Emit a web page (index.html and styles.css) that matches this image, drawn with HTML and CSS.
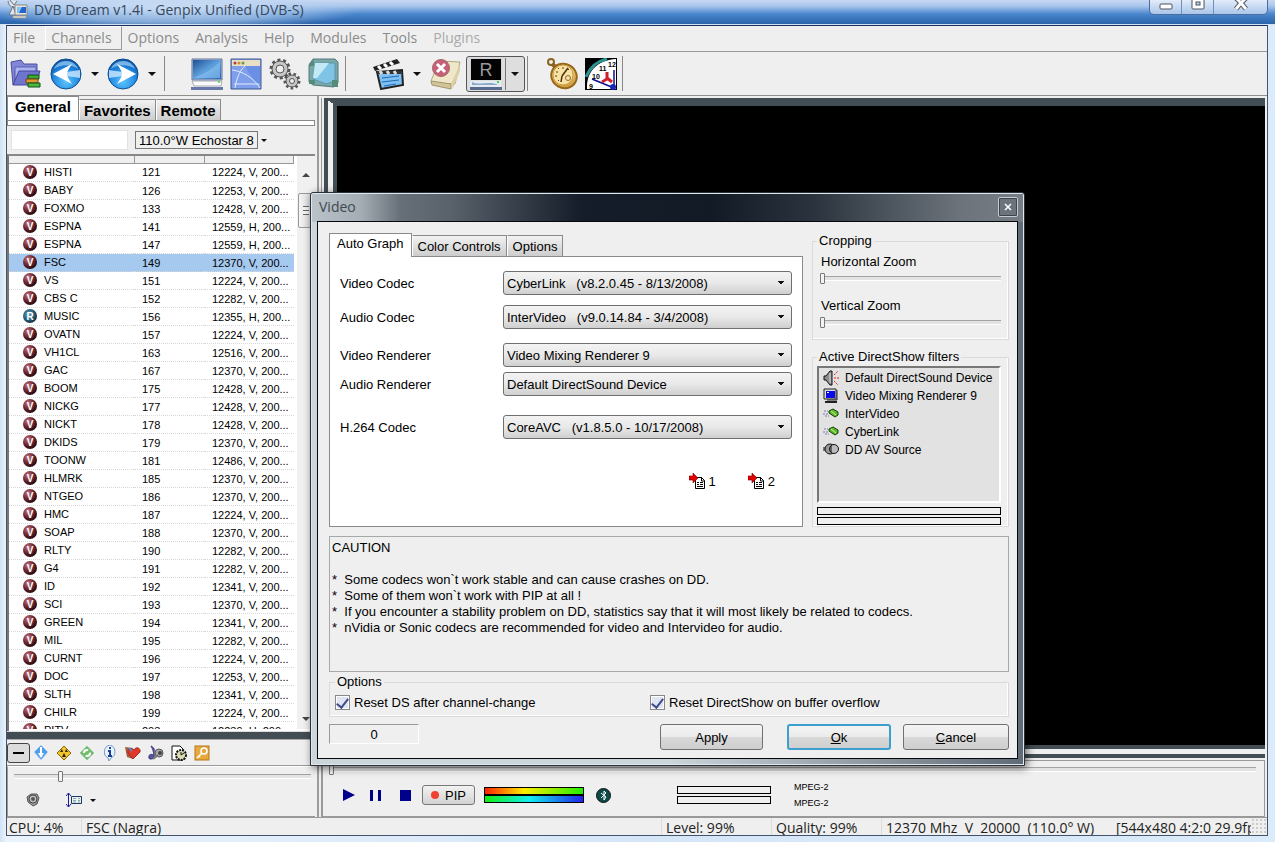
FILE: index.html
```html
<!DOCTYPE html>
<html lang="en">
<head>
  <meta charset="UTF-8" />
  <meta name="viewport" content="width=device-width, initial-scale=1.0" />
  <title>DVB Dream v1.4i - Genpix Unified (DVB-S)</title>
  <link rel="stylesheet" href="styles.css">
</head>
<body>
  <!-- shared icons -->
  <svg class="defs" width="0" height="0" aria-hidden="true">
    <defs>
      <radialGradient id="red" cx="35%" cy="30%" r="75%"><stop offset="0" stop-color="#c47e84"/><stop offset=".45" stop-color="#7d2f3b"/><stop offset="1" stop-color="#1d0508"/></radialGradient>
      <radialGradient id="teal" cx="40%" cy="40%" r="70%"><stop offset="0" stop-color="#6fa9bd"/><stop offset=".5" stop-color="#2f6680"/><stop offset="1" stop-color="#0b1c28"/></radialGradient>
      <radialGradient id="ball" cx="50%" cy="75%" r="75%"><stop offset="0" stop-color="#5cc4ff"/><stop offset=".6" stop-color="#1f86e0"/><stop offset="1" stop-color="#0b4f9f"/></radialGradient>
      <linearGradient id="screen" x1="0" y1="0" x2="1" y2="1"><stop offset="0" stop-color="#1d4f94"/><stop offset=".5" stop-color="#5fa0dd"/><stop offset="1" stop-color="#2c66b4"/></linearGradient>
      <linearGradient id="gold" x1="0" y1="0" x2="1" y2="1"><stop offset="0" stop-color="#ffeeb5"/><stop offset="1" stop-color="#c98a25"/></linearGradient>
    </defs>
    <symbol id="i-v" viewBox="0 0 14 14"><circle cx="7" cy="7" r="7" fill="url(#red)"/><text x="7" y="11" text-anchor="middle" class="badge-text">V</text></symbol>
    <symbol id="i-r" viewBox="0 0 14 14"><circle cx="7" cy="7" r="7" fill="url(#teal)"/><text x="7" y="11" text-anchor="middle" class="badge-text">R</text></symbol>
    <symbol id="i-plug" viewBox="0 0 16 16"><path d="M1 5h4M0 8h5M2 10h4" stroke="#7a7ab0" stroke-dasharray="2 1"/><path d="M6 5l4-2 5 3v3l-3 2-6-4z" fill="#5fb92a" stroke="#123f08"/><path d="M8 5l5 4" stroke="#c7f59a"/></symbol>
    <symbol id="i-import" viewBox="0 0 17 16"><path d="M6.500 4.500h6l3 3v8h-9z" fill="#fff" stroke="#000"/><path d="M12.500 4v4h3M8 9.500h2M11 9.500h3M8 11.500h2M11 11.500h3M8 13.500h6" stroke="#000" fill="none"/><path d="M0 3h4V0l5 5-5 5V7H0z" fill="#e30000" stroke="#700" stroke-width=".6"/></symbol>
  </svg>

  <div class="window">
    <header class="titlebar">
      <svg class="app-icon" width="22" height="20" viewBox="0 0 22 20"><path d="M1 1c1 6 5 8 9 5M3 0l4 5 3-4M6 6l-4 9h7z" fill="#dfe5ec" stroke="#6d7884"/><path d="M8 5h12v10H8z" fill="#e9e6dc" stroke="#888"/><path d="M10 7h9v6h-9z" fill="#2165cc"/><path d="M10 7h5l-3 6h-2z" fill="#83c1f4"/><path d="M6 16h13v2H6z" fill="#d8d3c4" stroke="#999" stroke-width=".5"/></svg>
      <h1>DVB Dream v1.4i - Genpix Unified (DVB-S)</h1>
      <div class="window-buttons">
        <button aria-label="Minimize"><svg width="14" height="14" viewBox="0 0 14 14"><rect x="1" y="4" width="12" height="5" rx="1" fill="#fff" stroke="#4a5360"/></svg></button>
        <button aria-label="Maximize"><svg width="14" height="14" viewBox="0 0 14 14"><rect x="1" y="-3" width="12" height="12" rx="1" fill="#fff" stroke="#4a5360"/><rect x="5" y="2" width="4" height="3" fill="#bcd0ee" stroke="#4a5360"/></svg></button>
        <button class="wide" aria-label="Close"><svg width="14" height="14" viewBox="0 0 14 14"><path d="M2 -2l5 5 5-5M2 9l5-6 5 6" stroke="#4a5360" stroke-width="5" fill="none"/><path d="M2 -2l5 5 5-5M2 9l5-6 5 6" stroke="#fff" stroke-width="3" fill="none"/></svg></button>
      </div>
    </header>

    <div class="client">
      <nav class="menubar">
        <button>File</button>
        <button class="hot">Channels</button>
        <button>Options</button>
        <button>Analysis</button>
        <button>Help</button>
        <button>Modules</button>
        <button>Tools</button>
        <button class="light">Plugins</button>
      </nav>

      <div class="toolbar">
        <div class="tools">
          <button class="tool folder" aria-label="Open channels"><svg width="32" height="32" viewBox="0 0 32 32"><path d="M1 4l10-2 3 4h13v7H5v12L3 27z" fill="#8187d6" stroke="#4b4f9c"/><path d="M5 9h21v16H5z" fill="#abb4f0" stroke="#5b60b0"/><path d="M9 13h21l-4 14H3z" fill="#6d75cf" stroke="#44499a"/><path d="M18 17h11v4H18z" fill="#3aa935" stroke="#14501b"/><path d="M16 21h12v4H16z" fill="#e09a31" stroke="#6c4410"/><path d="M18 25h12v4H18z" fill="#49b83c" stroke="#14501b"/></svg></button>
          <button class="tool" aria-label="Back"><svg width="32" height="32" viewBox="0 0 32 32"><circle cx="16" cy="16" r="15" fill="url(#ball)" stroke="#0a4d92"/><path d="M4 11a13 13 0 0 1 24 0c-7-5-17-5-24 0z" fill="#9fd3fa" opacity=".7"/><path d="M16 14c5-1 10-1 14-2v8c-4-1-9-1-14-2z" fill="#cfeaff" opacity=".8"/><path d="M3 16L22 6c-4 6-5 8-5 10s1 4 5 10z" fill="#fff"/></svg></button>
          <button class="drop" aria-label="Back history"></button>
          <button class="tool" aria-label="Forward"><svg width="32" height="32" viewBox="0 0 32 32"><circle cx="16" cy="16" r="15" fill="url(#ball)" stroke="#0a4d92"/><path d="M4 11a13 13 0 0 1 24 0c-7-5-17-5-24 0z" fill="#9fd3fa" opacity=".7"/><path d="M16 14c-5-1-10-1-14-2v8c4-1 9-1 14-2z" fill="#cfeaff" opacity=".8"/><path d="M29 16L10 6c4 6 5 8 5 10s-1 4-5 10z" fill="#fff"/></svg></button>
          <button class="drop" aria-label="Forward history"></button>
        </div>
        <div class="tools spaced">
          <button class="tool" aria-label="Display"><svg width="32" height="32" viewBox="0 0 32 32"><path d="M1 1h30v21H1z" fill="#b4c4da" stroke="#5f7396"/><path d="M2 2h28v19H2z" fill="url(#screen)"/><path d="M3 20C12 16 20 12 29 4v16z" fill="#8fc8f5" opacity=".6"/><path d="M1 23h30l-1 5H3z" fill="#fafafa" stroke="#a6adb8"/><path d="M0 29h32v3H0z" fill="#6878a8"/><circle cx="28" cy="24" r="1" fill="#3d3"/></svg></button>
          <button class="tool" aria-label="Signal graph"><svg width="32" height="32" viewBox="0 0 32 32"><path d="M1 1h30v30H1z" fill="#7f9fec" stroke="#3e568f"/><path d="M2 2h28v6H2z" fill="#e9dfc4"/><circle cx="5" cy="5" r="1.500" fill="#b93a3a"/><circle cx="9" cy="5" r="1.500" fill="#c98a3a"/><circle cx="13" cy="5" r="1.500" fill="#6a9b4a"/><path d="M2 12c10 1 22 8 28 18M5 30C7 18 11 11 15 8M4 26h26" stroke="#e1ebff" fill="none"/><path d="M15 8c4 8 9 15 15 19V8z" fill="#557fdd" opacity=".5"/></svg></button>
          <button class="tool" aria-label="Settings"><svg width="32" height="32" viewBox="0 0 32 32"><g fill="none" stroke="#555"><circle cx="11" cy="11" r="9" stroke-width="3" stroke-dasharray="3 2.650"/><circle cx="11" cy="11" r="8" fill="#c6c6c6"/><circle cx="11" cy="11" r="4" fill="#efefef"/><circle cx="23" cy="23" r="7" stroke-width="3" stroke-dasharray="2.500 2.390"/><circle cx="23" cy="23" r="6" fill="#c6c6c6"/><circle cx="23" cy="23" r="2.500" fill="#efefef"/></g></svg></button>
          <button class="tool" aria-label="Picture"><svg width="32" height="32" viewBox="0 0 32 32"><path d="M5 1h22l3 3v21l-4 4-21-2-4-3V7z" fill="#7ba7a6" stroke="#527a7c"/><path d="M7 5h20v18l-9 3-13-5z" fill="#7fc4e4" stroke="#5a97ab"/><path d="M7 5h14L9 20H5z" fill="#c2e9f5"/><path d="M24 22h6v7h-6zM1 22h6v4H1zM1 6l5-4v6H1z" fill="#538b7c"/></svg></button>
        </div>
        <div class="tools spaced">
          <button class="tool" aria-label="Record"><svg width="32" height="32" viewBox="0 0 32 32"><path d="M5 14l25-2 1 15-22 4z" fill="#7cc0f4" stroke="#222" stroke-width="2"/><path d="M1 9l24-8 3 4L3 13z" fill="#222"/><path d="M6 8l3 3M12 6l3 3M18 4l3 3" stroke="#fff" stroke-width="3"/><path d="M5 13h24v3H5z" fill="#333"/><path d="M8 13l2 3M15 13l2 3M22 13l2 3" stroke="#ddd" stroke-width="3"/><path d="M10 20l17-2M10 24l17-2M12 28l12-2" stroke="#2368b0"/></svg></button>
          <button class="drop" aria-label="Record options"></button>
          <button class="tool" aria-label="Stop recording"><svg width="32" height="32" viewBox="0 0 32 32"><path d="M10 3l21 1-5 22H7L2 23z" fill="#efe7c9" stroke="#b4a67c"/><path d="M2 23l20 3v5L3 27z" fill="#d3c59b" stroke="#a3946a"/><path d="M22 26l9-20v7l-7 17z" fill="#dccfa5"/><circle cx="12" cy="10" r="8.500" fill="#c4607a" stroke="#a66"/><path d="M8 6l8 8M16 6l-8 8" stroke="#fff" stroke-width="3"/></svg></button>
          <span class="pressed">
            <button aria-label="Radio screen"><svg width="32" height="32" viewBox="0 0 32 32"><path d="M0 0h32v22H0z" fill="#cfd4dc"/><path d="M1 1h30v21H1z" fill="#030303"/><text x="16" y="18" text-anchor="middle" class="r-text">R</text><path d="M0 23h31v6H0z" fill="#e3eaf2"/><path d="M2 24c8 4 18-2 26 3H2z" fill="#8aa8c8"/><path d="M0 29h32v3H0z" fill="#56698f"/><circle cx="28" cy="24" r="1" fill="#2b2"/></svg></button>
            <button class="drop" aria-label="Radio screen options"></button>
          </span>
        </div>
        <div class="tools last">
          <button class="tool" aria-label="Timer"><svg width="32" height="32" viewBox="0 0 32 32"><circle cx="5" cy="4" r="3" fill="none" stroke="#8a6321" stroke-width="2"/><path d="M6 6l5 4" stroke="#8a6321" stroke-width="4"/><ellipse cx="18" cy="18" rx="13" ry="12" transform="rotate(30 18 18)" fill="url(#gold)" stroke="#966719" stroke-width="2"/><circle cx="17" cy="17" r="10" fill="#f8e3a5" stroke="#c99b45"/><path d="M17 9v2M10 14h2M9 18h2M12 23l1-1M12 10l1 1M23 11l-1 1" stroke="#5a3a10"/><path d="M16 18l6-8M16 18l-1 6" stroke="#4a3010" stroke-width="1.500"/><circle cx="22" cy="20" r="2.500" fill="none" stroke="#8a6a32"/></svg></button>
          <button class="tool" aria-label="Schedule"><svg width="32" height="32" viewBox="0 0 32 32"><path d="M0 0h32v32H0z"/><path d="M2 31C1 14 12 2 31 1v30z" fill="#fff"/><path d="M1 19C5 9 12 3 22 1" fill="none" stroke="#2c9393" stroke-width="3"/><path d="M7 21l22 9M29 12v18" stroke="#0d0d94" stroke-width="1.500"/><path d="M22 14v7l-5 3M22 20l5 4" stroke="#d01f2c" stroke-width="3" fill="none"/><text x="14" y="13" class="dial">11</text><text x="23" y="9" class="dial">12</text><text x="7" y="21" class="dial">10</text><text x="4" y="31" class="dial">9</text><circle cx="28" cy="29" r="3" fill="#1728b4"/></svg></button>
        </div>
      </div>

      <div class="workspace">
        <aside class="sidebar">
          <div class="side-tabs" role="tablist">
            <button role="tab" class="active">General</button>
            <button role="tab">Favorites</button>
            <button role="tab">Remote</button>
          </div>
          <div class="tab-strip"></div>
          <div class="search-row">
            <input type="text" aria-label="Search channel">
            <button class="satellite">110.0°W Echostar 8</button>
            <button class="drop" aria-label="Choose satellite"></button>
          </div>
          <div class="channels">
            <div class="channel-list">
              <table>
                <thead><tr><th></th><th></th><th></th></tr></thead>
                <tbody>
                  <tr><td><svg><use href="#i-v"/></svg>HISTI</td><td>121</td><td>12224, V, 200...</td></tr>
                  <tr><td><svg><use href="#i-v"/></svg>BABY</td><td>126</td><td>12253, V, 200...</td></tr>
                  <tr><td><svg><use href="#i-v"/></svg>FOXMO</td><td>133</td><td>12428, V, 200...</td></tr>
                  <tr><td><svg><use href="#i-v"/></svg>ESPNA</td><td>141</td><td>12559, H, 200...</td></tr>
                  <tr><td><svg><use href="#i-v"/></svg>ESPNA</td><td>147</td><td>12559, H, 200...</td></tr>
                  <tr class="selected"><td><svg><use href="#i-v"/></svg>FSC</td><td>149</td><td>12370, V, 200...</td></tr>
                  <tr><td><svg><use href="#i-v"/></svg>VS</td><td>151</td><td>12224, V, 200...</td></tr>
                  <tr><td><svg><use href="#i-v"/></svg>CBS C</td><td>152</td><td>12282, V, 200...</td></tr>
                  <tr><td><svg><use href="#i-r"/></svg>MUSIC</td><td>156</td><td>12355, H, 200...</td></tr>
                  <tr><td><svg><use href="#i-v"/></svg>OVATN</td><td>157</td><td>12224, V, 200...</td></tr>
                  <tr><td><svg><use href="#i-v"/></svg>VH1CL</td><td>163</td><td>12516, V, 200...</td></tr>
                  <tr><td><svg><use href="#i-v"/></svg>GAC</td><td>167</td><td>12370, V, 200...</td></tr>
                  <tr><td><svg><use href="#i-v"/></svg>BOOM</td><td>175</td><td>12428, V, 200...</td></tr>
                  <tr><td><svg><use href="#i-v"/></svg>NICKG</td><td>177</td><td>12428, V, 200...</td></tr>
                  <tr><td><svg><use href="#i-v"/></svg>NICKT</td><td>178</td><td>12428, V, 200...</td></tr>
                  <tr><td><svg><use href="#i-v"/></svg>DKIDS</td><td>179</td><td>12370, V, 200...</td></tr>
                  <tr><td><svg><use href="#i-v"/></svg>TOONW</td><td>181</td><td>12486, V, 200...</td></tr>
                  <tr><td><svg><use href="#i-v"/></svg>HLMRK</td><td>185</td><td>12370, V, 200...</td></tr>
                  <tr><td><svg><use href="#i-v"/></svg>NTGEO</td><td>186</td><td>12370, V, 200...</td></tr>
                  <tr><td><svg><use href="#i-v"/></svg>HMC</td><td>187</td><td>12224, V, 200...</td></tr>
                  <tr><td><svg><use href="#i-v"/></svg>SOAP</td><td>188</td><td>12370, V, 200...</td></tr>
                  <tr><td><svg><use href="#i-v"/></svg>RLTY</td><td>190</td><td>12282, V, 200...</td></tr>
                  <tr><td><svg><use href="#i-v"/></svg>G4</td><td>191</td><td>12282, V, 200...</td></tr>
                  <tr><td><svg><use href="#i-v"/></svg>ID</td><td>192</td><td>12341, V, 200...</td></tr>
                  <tr><td><svg><use href="#i-v"/></svg>SCI</td><td>193</td><td>12370, V, 200...</td></tr>
                  <tr><td><svg><use href="#i-v"/></svg>GREEN</td><td>194</td><td>12341, V, 200...</td></tr>
                  <tr><td><svg><use href="#i-v"/></svg>MIL</td><td>195</td><td>12282, V, 200...</td></tr>
                  <tr><td><svg><use href="#i-v"/></svg>CURNT</td><td>196</td><td>12224, V, 200...</td></tr>
                  <tr><td><svg><use href="#i-v"/></svg>DOC</td><td>197</td><td>12253, V, 200...</td></tr>
                  <tr><td><svg><use href="#i-v"/></svg>SLTH</td><td>198</td><td>12341, V, 200...</td></tr>
                  <tr><td><svg><use href="#i-v"/></svg>CHILR</td><td>199</td><td>12224, V, 200...</td></tr>
                  <tr><td><svg><use href="#i-v"/></svg>PITV</td><td>203</td><td>12239, H, 200...</td></tr>
                </tbody>
              </table>
            </div>
            <div class="scrollbar">
              <button class="up" aria-label="Scroll up"></button>
              <div class="scroll-thumb"></div>
              <button class="down" aria-label="Scroll down"></button>
            </div>
          </div>
          <div class="dark-bar"></div>
          <div class="filters">
            <button class="minus" aria-label="Collapse"></button>
            <button aria-label="Blue"><svg viewBox="0 0 16 16"><path d="M8 0l7 7-7 8-7-8z" fill="#4f9fe8" stroke="#b9d8f4"/><path d="M7 2h2v6h2l-3 5-3-5h2z" fill="#fff"/></svg></button>
            <button aria-label="Radiation"><svg viewBox="0 0 16 16"><path d="M8 1l7 7-7 7-7-7z" fill="#f3c52b" stroke="#8a6a10"/><path d="M4 7h3l-1-3zM9 7h3l-2-3zM6 12h4L8 8z" fill="#221"/></svg></button>
            <button aria-label="Refresh"><svg viewBox="0 0 16 16"><path d="M8 1l7 7-7 7-7-7z" fill="#6fbf6a" stroke="#9fc79f"/><circle cx="8" cy="8" r="3" fill="none" stroke="#fff" stroke-width="2" stroke-dasharray="6 3"/></svg></button>
            <button aria-label="Info"><svg viewBox="0 0 16 16"><path d="M8 0a7 7 0 0 1 1 13l-2 3-1-3A7 7 0 0 1 8 0z" fill="#e8f2fc" stroke="#6f9bc9"/><path d="M8 2v2M6 6h2v5M6 11h4" stroke="#1c3f9a" stroke-width="2" fill="none"/></svg></button>
            <button aria-label="Favorites"><svg viewBox="0 0 16 16"><path d="M0 2l7 1 1 11-6-2z" fill="#a65c40"/><path d="M8 14L3 8c-1-5 4-6 6-3 2-4 7-2 6 2z" fill="#e2382c" stroke="#932"/><path d="M4 3l3 3" stroke="#5b88c9" stroke-width="2"/></svg></button>
            <button aria-label="Audio"><svg viewBox="0 0 16 16"><path d="M3 1l3 3v7M6 11c0 3-5 4-5 1s3-3 5-1z" fill="#5b58a0" stroke="#4a4888" stroke-width="1.500"/><circle cx="11" cy="8" r="4" fill="#a9a9a9" stroke="#555"/><circle cx="12" cy="8" r="2" fill="#444"/><path d="M5 14l5-4" stroke="#777" stroke-width="2"/></svg></button>
            <button aria-label="Schedule"><svg viewBox="0 0 16 16"><path d="M1 1h8l3 3v11H1z" fill="#fff" stroke="#111"/><circle cx="10" cy="10" r="5" fill="#dcdcb4" stroke="#111" stroke-width="2" stroke-dasharray="2 1"/><path d="M10 7v3l3-2" stroke="#111" fill="none"/></svg></button>
            <button aria-label="Key"><svg viewBox="0 0 16 16"><rect x="1" y="1" width="14" height="14" fill="#e8a83a" stroke="#b5781c"/><circle cx="10" cy="6" r="3" fill="none" stroke="#fff" stroke-width="1.500"/><path d="M8 8l-5 5M5 11l1 1" stroke="#fff" stroke-width="1.500"/></svg></button>
          </div>
          <div class="volume">
            <input type="range" aria-label="Volume" min="0" max="100" value="15">
            <div class="volume-icons">
              <button aria-label="Mute"><svg width="14" height="14" viewBox="0 0 14 14"><path d="M1 4l4-3h6l2 4-2 6-4 2-5-4z" fill="#999" stroke="#555"/><circle cx="7" cy="6" r="4" fill="#c4c4c4" stroke="#444"/><circle cx="7" cy="6" r="2" fill="#555"/></svg></button>
              <button class="aspect" aria-label="Aspect ratio"><svg width="17" height="15" viewBox="0 0 17 15"><path d="M2.500 0v14M0 3l2.500-3 2.500 3M0 11l2.500 3 2.500-3" stroke="#1a1a9a" fill="none"/><path d="M5.500 3.500h10v7h-10z" fill="#e7f3e9" stroke="#236"/><path d="M7 5.500h3M12 5.500h2M7 7.500h3M12 7.500h2M7 9h3M12 9h2" stroke="#8ab"/></svg></button>
              <button class="drop" aria-label="Aspect ratio options"></button>
            </div>
          </div>
        </aside>

        <main class="stage">
          <div class="screen"></div>
          <div class="player">
            <input type="range" class="seek" aria-label="Position" value="0">
            <div class="controls">
              <button aria-label="Play"><svg width="12" height="12"><path d="M0 0l12 6-12 6z" fill="#00008b"/></svg></button>
              <button class="pause" aria-label="Pause"><svg width="11" height="11"><path d="M0 0h3v11H0zM8 0h3v11H8z" fill="#00008b"/></svg></button>
              <button class="stop" aria-label="Stop"><svg width="11" height="11"><path d="M0 0h11v11H0z" fill="#00008b"/></svg></button>
              <button class="pip"><span class="dot"></span>PIP</button>
              <div class="levels"><div class="level warm"></div><div class="level cool"></div></div>
              <button class="globe" aria-label="Stream"><svg width="15" height="15" viewBox="0 0 15 15"><circle cx="7.500" cy="7.500" r="7" fill="#0b4a48" stroke="#111"/><path d="M5 5l5 4-2 3V3l2 2-5 5" stroke="#fff" fill="none"/></svg></button>
              <div class="meters"><div class="meter"></div><div class="meter"></div></div>
              <div class="formats"><span>MPEG-2</span><span>MPEG-2</span></div>
            </div>
          </div>
        </main>
      </div>

      <footer class="statusbar">
        <span class="cpu">CPU: 4%</span>
        <span class="name">FSC (Nagra)</span>
        <span class="level-text">Level: 99%</span>
        <span class="quality">Quality: 99%</span>
        <span class="tuning">12370 Mhz&nbsp; V&nbsp; 20000&nbsp; (110.0° W)</span>
        <span class="format">[544x480 4:2:0 29.9fps]</span>
        <span class="grip"></span>
      </footer>
    </div>
  </div>

  <section class="dialog" role="dialog" aria-labelledby="dialog-title">
    <div class="dialog-title">
      <h2 id="dialog-title">Video</h2>
      <button aria-label="Close"><svg width="8" height="8" viewBox="0 0 8 8"><path d="M1 1l6 6M7 1L1 7" stroke="#fff" stroke-width="1.500"/></svg></button>
    </div>
    <form class="dialog-body">
      <div class="top">
        <div class="tabs">
          <div class="tab-heads" role="tablist">
            <button type="button" role="tab" class="active">Auto Graph</button>
            <button type="button" role="tab">Color Controls</button>
            <button type="button" role="tab">Options</button>
          </div>
          <div class="tab-panel">
            <div class="rows codecs">
              <label for="video-codec">Video Codec</label>
              <select id="video-codec"><option>CyberLink&nbsp;&nbsp; (v8.2.0.45 - 8/13/2008)</option></select>
              <label for="audio-codec">Audio Codec</label>
              <select id="audio-codec"><option>InterVideo&nbsp;&nbsp; (v9.0.14.84 - 3/4/2008)</option></select>
            </div>
            <div class="rows renderers">
              <label for="video-renderer">Video Renderer</label>
              <select id="video-renderer"><option>Video Mixing Renderer 9</option></select>
              <label for="audio-renderer">Audio Renderer</label>
              <select id="audio-renderer"><option>Default DirectSound Device</option></select>
            </div>
            <div class="rows h264">
              <label for="h264-codec">H.264 Codec</label>
              <select id="h264-codec"><option>CoreAVC&nbsp;&nbsp; (v1.8.5.0 - 10/17/2008)</option></select>
            </div>
            <div class="presets">
              <button type="button"><svg width="17" height="16"><use href="#i-import"/></svg>1</button>
              <button type="button"><svg width="17" height="16"><use href="#i-import"/></svg>2</button>
            </div>
          </div>
        </div>

        <div class="side">
          <fieldset class="cropping">
            <legend>Cropping</legend>
            <label for="h-zoom">Horizontal Zoom</label>
            <input type="range" id="h-zoom" value="0">
            <label for="v-zoom">Vertical Zoom</label>
            <input type="range" id="v-zoom" value="0">
          </fieldset>
          <fieldset class="active-filters">
            <legend>Active DirectShow filters</legend>
            <ul>
              <li><svg viewBox="0 0 16 16"><path d="M1 6h2l4-5h2v14H7L3 10H1z" fill="#8d8d8d" stroke="#111"/><path d="M7 3v10" stroke="#ddd"/><path d="M11 5l4-4M11 8h5M11 11l4 4" stroke="#d22" stroke-dasharray="2 1"/></svg>Default DirectSound Device</li>
              <li><svg viewBox="0 0 16 16"><path d="M1 1h12v10H1z" fill="#ddd" stroke="#222"/><path d="M3 3h9v7H3z" fill="#0a0ae8"/><path d="M14 2v10H4" stroke="#222" fill="none"/><path d="M2 14h12" stroke="#222" stroke-width="2"/><path d="M4 4h2v1H4z" fill="#fff"/></svg>Video Mixing Renderer 9</li>
              <li><svg><use href="#i-plug"/></svg>InterVideo</li>
              <li><svg><use href="#i-plug"/></svg>CyberLink</li>
              <li><svg viewBox="0 0 16 16"><path d="M0 6h5M0 8h5" stroke="#111"/><circle cx="7" cy="7" r="5" fill="#999" stroke="#111"/><circle cx="11" cy="7" r="4.500" fill="#bbb" stroke="#111"/><path d="M8 4v6" stroke="#111"/></svg>DD AV Source</li>
            </ul>
            <div class="meter"></div>
            <div class="meter"></div>
          </fieldset>
        </div>
      </div>

      <textarea class="caution" readonly aria-label="Caution" rows="8">CAUTION

*  Some codecs won`t work stable and can cause crashes on DD.
*  Some of them won`t work with PIP at all !
*  If you encounter a stability problem on DD, statistics say that it will most likely be related to codecs.
*  nVidia or Sonic codecs are recommended for video and Intervideo for audio.</textarea>

      <fieldset class="options">
        <legend>Options</legend>
        <label><input type="checkbox" checked>Reset DS after channel-change</label>
        <label><input type="checkbox" checked>Reset DirectShow on buffer overflow</label>
      </fieldset>

      <div class="actions">
        <output>0</output>
        <button type="button">Apply</button>
        <button type="submit" class="default"><u>O</u>k</button>
        <button type="button"><u>C</u>ancel</button>
      </div>
    </form>
  </section>
</body>
</html>
```
FILE: styles.css
```css
* {
  box-sizing: border-box;
}
body {
  margin: 0;
  height: 100vh;
  overflow: hidden;
  position: relative;
  font-family: "Liberation Sans", Arial, sans-serif;
  font-size: 13px;
  color: #000;
  background: #d3e4f6;
}
button,
input,
select,
textarea {
  font: inherit;
  color: inherit;
  margin: 0;
  padding: 0;
}
button {
  background: none;
  border: none;
  display: flex;
  align-items: center;
  justify-content: center;
}
svg {
  display: block;
  flex: none;
}
.defs {
  position: absolute;
}
.badge-text {
  font: bold 10px "Liberation Sans", sans-serif;
  fill: #fff;
}
.r-text {
  font: 18px "Liberation Sans", sans-serif;
  fill: #999;
}
.dial {
  font: bold 7px "Liberation Sans", sans-serif;
}

/* main window */
.window {
  height: 100%;
  display: flex;
  flex-direction: column;
  background: linear-gradient(90deg, #cfe2f4, #eaf3fc 6px, #d5e6f8 50%, #dcebfb);
}
.titlebar {
  display: flex;
  align-items: flex-start;
  height: 25px;
  flex: none;
  padding-left: 7px;
  border-bottom: 1px solid #d3e1f2;
  background:
    radial-gradient(ellipse 190px 20px at 170px 10px, rgba(215, 230, 248, 0.8), rgba(190, 214, 242, 0.6) 60%, transparent),
    linear-gradient(#c9d8f3, #a9c6ec 6px, #4a86cd 14px, #2d66ad 23px);
}
.titlebar h1 {
  margin: 0 auto 0 5px;
  font: 14px/19px "Open Sans", "Noto Sans", sans-serif;
  color: #38475a;
}
.window-buttons {
  display: flex;
  height: 15px;
  margin-right: 7px;
  border: 1px solid #4c6c9e;
  border-top: none;
  border-radius: 0 0 5px 5px;
  background: linear-gradient(#e3ecfa, #a9c5ea);
}
.window-buttons button {
  width: 32px;
  border-right: 1px solid #6f8fbf;
}
.window-buttons .wide {
  width: 53px;
  border-right: none;
}
.client {
  flex: 1;
  min-height: 0;
  margin: 0 7px 6px 6px;
  display: flex;
  flex-direction: column;
  background: #efefef;
  border: 1px solid #43536b;
  border-top-color: #16335c;
}

.menubar {
  display: flex;
  align-items: center;
  height: 26px;
  flex: none;
  border-bottom: 1px solid #999;
  font: 14px/20px "Open Sans", "Noto Sans", sans-serif;
  color: #8b8b8b;
}
.menubar button {
  height: 24px;
  margin-top: -2px;
  padding: 0 9px 0 5px;
  border: 1px solid transparent;
}
.menubar .hot {
  border-color: #fff #999 #999 #fff;
}
.menubar .light {
  color: #aaa;
}

.toolbar {
  display: flex;
  align-items: center;
  height: 44px;
  flex: none;
  border-bottom: 1px solid #8f8f8f;
}
.tools {
  display: flex;
  align-items: center;
  height: 35px;
  padding-left: 3px;
  border-right: 1px solid #888;
}
.tools.spaced {
  padding: 0 5px 0 19px;
}
.tools.last {
  gap: 7px;
  padding: 0 5px 0 18px;
}
.spaced .tool {
  margin-left: 7px;
}
.spaced .drop + .tool {
  margin: 0 5px 0 0;
}
.folder {
  margin-right: 8px;
}
.drop {
  width: 25px;
  height: 32px;
}
.drop::before {
  content: "";
  border: 4px solid transparent;
  border-top-color: #111;
  border-bottom: none;
}
.pressed {
  display: flex;
  align-items: center;
  height: 36px;
  margin-right: -3px;
  border: 1px solid #555;
  border-radius: 3px;
  background: #dedede;
}
.pressed button:first-child {
  padding: 0 3px;
}
.pressed .drop {
  width: 19px;
  border-left: 1px solid #777;
}

.workspace {
  flex: 1;
  min-height: 0;
  display: flex;
}

/* channel list */
.sidebar {
  width: 312px;
  flex: none;
  display: flex;
  flex-direction: column;
  padding-right: 2px;
  border-right: 2px solid #9c9c9c;
}
.side-tabs {
  display: flex;
  align-items: flex-end;
  height: 24px;
  flex: none;
  font-weight: bold;
  font-size: 15px;
}
.side-tabs button,
.tab-heads button {
  height: 21px;
  padding: 0 4px;
  border: 1px solid #8a8a8a;
  border-bottom: none;
  border-left-color: #fff;
  background: linear-gradient(#f2f2f2, #cdcdcd);
}
.tab-heads button {
  padding: 0 5px;
}
.side-tabs .active,
.tab-heads .active {
  height: 24px;
  padding: 0 7px 4px;
  background: #fff;
  border-left-color: #8a8a8a;
}
.tab-strip {
  height: 6px;
  flex: none;
  background: #fff;
  border: 1px solid #8a8a8a;
}
.search-row {
  display: flex;
  align-items: center;
  height: 28px;
  flex: none;
  padding-left: 4px;
}
.search-row input {
  width: 117px;
  height: 20px;
  padding: 0 2px;
  background: #fff;
  border: 1px solid #e3e3e3;
}
.satellite {
  height: 18px;
  margin-left: 7px;
  padding: 0 3px;
  border: 1px solid #777;
  white-space: nowrap;
}
.search-row .drop {
  width: 13px;
}
.search-row .drop::before,
.volume .drop::before {
  border-width: 3px;
  border-bottom: none;
}
.channels {
  flex: 1;
  min-height: 0;
  display: flex;
  padding-bottom: 2px;
  border-top: 2px solid #888;
  border-left: 2px solid #777;
  background: #fff;
}
.channel-list {
  flex: 1;
  overflow: hidden;
}
.channels table {
  width: 285px;
  table-layout: fixed;
  border-collapse: collapse;
  font-size: 11px;
}
.channels th {
  height: 7px;
  padding: 0;
  background: #efefef;
  border: 1px solid #999;
  border-width: 0 1px 1px 0;
}
.channels th:first-child {
  width: 125px;
}
.channels th:nth-child(2) {
  width: 70px;
}
.channels td {
  height: 18px;
  padding: 0 0 0 8px;
  white-space: nowrap;
  border-bottom: 1px dotted #d8d8d8;
}
.channels td:first-child {
  display: flex;
  align-items: center;
  gap: 7px;
  padding-left: 14px;
}
.channels td svg {
  width: 14px;
  height: 14px;
}
.channels .selected {
  background: #a6c9f0;
}
.scrollbar {
  width: 18px;
  display: flex;
  flex-direction: column;
  background: #f0f0f0;
}
.scrollbar button {
  height: 20px;
}
.scrollbar button::before {
  content: "";
  border: 4px solid transparent;
}
.scrollbar .up {
  height: 37px;
}
.scrollbar .up::before {
  border-bottom-color: #444;
  border-top: none;
}
.scrollbar .down {
  margin-top: auto;
}
.scrollbar .down::before {
  border-top-color: #444;
  border-bottom: none;
}
.scroll-thumb {
  height: 35px;
  margin: 0 1px;
  padding: 12px 4px;
  border: 1px solid #999;
  border-radius: 2px;
  background: repeating-linear-gradient(#666 0 1px, #f3f3f3 1px 4px) content-box, linear-gradient(90deg, #f5f5f5, #d6d6d6);
}
.dark-bar {
  height: 9px;
  flex: none;
  background: #434e54;
  border-top: 1px solid #ddd;
  border-bottom: 1px solid #aaa;
}
.filters {
  display: flex;
  align-items: center;
  gap: 7px;
  height: 26px;
  flex: none;
  border-bottom: 1px solid #999;
}
.filters svg {
  width: 16px;
  height: 16px;
}
.filters .minus {
  width: 23px;
  height: 20px;
  margin-right: -4px;
  border: 1px solid #444;
  border-radius: 3px;
  background: #dcdcdc;
}
.minus::before {
  content: "";
  width: 11px;
  height: 2px;
  background: #000;
}
.volume {
  height: 51px;
  flex: none;
  padding: 3px 4px 0 6px;
  border-top: 1px solid #fff;
  border-left: 1px solid #999;
  border-bottom: 1px solid #999;
}
.volume-icons {
  display: flex;
  align-items: center;
  padding: 6px 12px 0;
}
.volume-icons .aspect {
  margin-left: 26px;
}
.volume-icons .drop {
  width: 20px;
  height: 24px;
}

input[type="range"] {
  appearance: none;
  display: block;
  width: 100%;
  height: 12px;
  background: linear-gradient(transparent 4px, #a3a3a3 4px 5px, #e3e3e3 5px 8px, #fff 8px 9px, transparent 9px);
}
input[type="range"]::-webkit-slider-thumb {
  appearance: none;
  width: 5px;
  height: 11px;
  border: 1px solid #777;
  border-radius: 1px;
  background: #f3f3f3;
}

/* picture and player */
.stage {
  flex: 1;
  min-width: 0;
  display: flex;
  flex-direction: column;
  margin: 2px 2px 0;
  border-left: 1px solid #999;
}
.screen {
  flex: 1;
  margin-left: 2px;
  background: #000 padding-box;
  border-top: 8px solid #434e54;
  border-left: 13px double #434e54;
  border-bottom: 13px double #434e54;
}
.player {
  height: 57px;
  flex: none;
  margin-top: 2px;
  padding: 2px 8px 0 6px;
  border: 1px solid #999;
}
.controls {
  display: flex;
  align-items: center;
  height: 26px;
  margin-top: 7px;
  padding-left: 14px;
}
.pause {
  margin-left: 15px;
}
.stop {
  margin-left: 19px;
}
.pip {
  gap: 6px;
  height: 20px;
  margin-left: 11px;
  padding: 0 8px;
  border: 1px solid #777;
  border-radius: 3px;
  background: linear-gradient(#f2f2f2, #d2d2d2);
}
.dot {
  width: 8px;
  height: 8px;
  border-radius: 50%;
  background: #f04030;
}
.levels {
  width: 100px;
  margin: 0 12px 0 9px;
}
.level {
  height: 8px;
  border: 1px solid #000;
}
.warm {
  background: linear-gradient(90deg, #f20, #fe0 40%, #2e0);
}
.cool {
  background: linear-gradient(90deg, #1e1, #1ee 45%, #22e);
}
.meter {
  height: 8px;
  border: 1px solid #000;
}
.meter + .meter {
  margin-top: 2px;
}
.meters {
  width: 94px;
  margin: 0 23px 0 66px;
}
.formats {
  display: flex;
  flex-direction: column;
  font-size: 9px;
  line-height: 16px;
}

.statusbar {
  display: flex;
  height: 18px;
  flex: none;
  overflow: hidden;
  border-top: 1px solid #999;
  font: 14px/19px "Open Sans", "Noto Sans", sans-serif;
  color: #222;
  white-space: nowrap;
}
.statusbar span {
  padding-left: 4px;
  border-left: 1px solid #ddd;
  overflow: hidden;
}
.statusbar .cpu {
  width: 74px;
  padding-left: 2px;
  border: none;
}
.statusbar .name {
  flex: 1;
}
.statusbar .level-text {
  width: 110px;
}
.statusbar .quality {
  width: 110px;
}
.statusbar .tuning {
  width: 231px;
}
.statusbar .format {
  width: 139px;
  border: none;
}
.statusbar .grip {
  width: 16px;
  border: none;
  background: radial-gradient(#ccc 1px, transparent 1px) 0 0 / 4px 4px;
}

/* video settings window */
.dialog {
  position: absolute;
  left: 310px;
  top: 192px;
  width: 715px;
  padding: 0 6px 6px;
  border: 1px solid #2b3138;
  border-radius: 3px 3px 0 0;
  box-shadow: inset 0 0 0 1px #dfe6ec, 2px 2px 8px rgba(0, 0, 0, 0.6);
  background:
    linear-gradient(90deg, #b9c3c9, #a4adb4 50px, #666e77 90px, #59616b 140px, #141d29 270px, #111a25 400px, #2a333d 500px, #6c737b 650px, #777e85) 0 0 / 100% 29px no-repeat,
    linear-gradient(90deg, #ccd5da 50%, #5f6b76);
}
.dialog-title {
  display: flex;
  align-items: center;
  justify-content: space-between;
  height: 28px;
  padding-left: 2px;
}
.dialog-title h2 {
  margin: 0;
  font: 14px/20px "Open Sans", "Noto Sans", sans-serif;
  color: #40474e;
}
.dialog-title button {
  width: 20px;
  height: 20px;
  border: 1px solid #c5cbd0;
  border-radius: 2px;
  background: #6b737b;
  outline: 1px solid #3d454d;
  outline-offset: -2px;
}
.dialog-body {
  display: flex;
  flex-direction: column;
  padding: 11px 8px 8px 11px;
  background: #efefef;
  border: 1px solid #05080c;
}
.top {
  display: flex;
  gap: 9px;
  height: 294px;
}
.tabs {
  flex: 1;
  display: flex;
  flex-direction: column;
}
.tab-heads {
  display: flex;
  align-items: flex-end;
  height: 23px;
}
.tab-panel {
  flex: 1;
  padding: 14px 10px 0;
  background: #fff;
  border: 1px solid #8a8a8a;
}
.tab-heads .active {
  margin-bottom: -1px;
  z-index: 1;
}
.rows {
  display: grid;
  grid-template-columns: 1fr 289px;
  align-items: center;
}
.codecs {
  row-gap: 10px;
}
.renderers {
  row-gap: 5px;
  margin-top: 14px;
}
.h264 {
  margin-top: 19px;
}
select {
  appearance: none;
  height: 24px;
  padding: 0 3px;
  border: 1px solid #6f6f6f;
  border-radius: 3px;
  background:
    linear-gradient(to bottom left, #111 50%, transparent 50%) right 10px center / 4px 4px no-repeat,
    linear-gradient(to bottom right, #111 50%, transparent 50%) right 6px center / 4px 4px no-repeat,
    linear-gradient(#f3f3f3, #e9e9e9 50%, #cfcfcf);
}
.presets {
  display: flex;
  justify-content: flex-end;
  gap: 32px;
  margin: 34px 17px 0 0;
}
.presets button {
  gap: 3px;
}
.side {
  width: 197px;
  display: flex;
  flex-direction: column;
  gap: 9px;
}
fieldset {
  margin: 0;
  padding: 0 7px;
  min-width: 0;
  border: 1px solid #dadada;
  box-shadow: inset -1px -1px #fff;
}
legend {
  padding: 0 2px;
  line-height: 16px;
}
.cropping {
  height: 107px;
  padding: 0 7px;
}
.cropping legend {
  margin-left: -3px;
}
.cropping label {
  display: block;
  padding: 5px 1px 2px;
  line-height: 16px;
}
.cropping label + input {
  margin-bottom: 9px;
}
.active-filters {
  flex: 1;
  padding: 1px 7px 0 4px;
}
.active-filters ul {
  height: 137px;
  margin: 0 0 4px;
  padding: 1px 4px;
  list-style: none;
  background: #e2e2e2;
  border: 2px solid #fff;
  border-top-color: #777;
  border-left-color: #777;
}
.active-filters li {
  display: flex;
  align-items: center;
  gap: 6px;
  height: 18px;
  font-size: 12px;
  white-space: nowrap;
}
.active-filters li svg {
  width: 16px;
  height: 16px;
}
.caution {
  height: 136px;
  margin-top: 9px;
  padding: 3px 2px;
  line-height: 16px;
  resize: none;
  overflow: hidden;
  background: #efefef;
  border: 1px solid #a5a9a9;
}
.options {
  display: grid;
  grid-template-columns: 315px 1fr;
  height: 43px;
  margin-top: 2px;
  padding: 0 5px;
}
.options label {
  display: flex;
  align-items: center;
  gap: 4px;
  height: 24px;
}
input[type="checkbox"] {
  appearance: none;
  width: 15px;
  height: 15px;
  border: 1px solid #888;
  background: #dfe5f3;
  box-shadow: inset 0 0 0 1px #fff;
  display: grid;
  place-items: center;
}
input[type="checkbox"]:checked::before {
  content: "";
  width: 5px;
  height: 10px;
  border: solid #3f4c8c;
  border-width: 0 2px 2px 0;
  transform: rotate(38deg);
}
.actions {
  display: flex;
  margin-top: 7px;
}
.actions output {
  width: 90px;
  height: 20px;
  margin-right: auto;
  line-height: 19px;
  text-align: center;
  border: 1px solid #fff;
  border-top-color: #999;
  border-left-color: #999;
}
.actions button {
  width: 103px;
  height: 26px;
  border: 1px solid #707070;
  border-radius: 3px;
  background: linear-gradient(#f4f4f4, #ebebeb 48%, #d8d8d8 52%, #cfcfcf);
}
.actions .default {
  width: 104px;
  margin: 0 12px 0 24px;
  border: 2px solid #3c9fd0;
}
.actions button:last-child {
  width: 106px;
}
```
